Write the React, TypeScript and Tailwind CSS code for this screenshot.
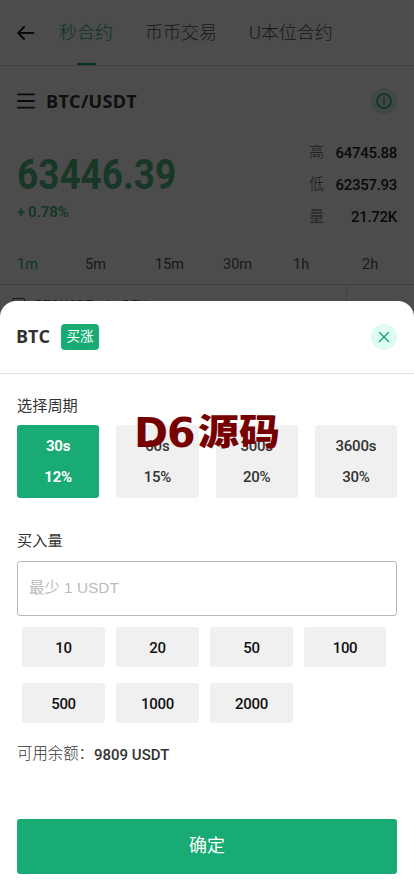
import { X } from 'lucide-react';

const stats = [
  { label: '高', value: '64745.88' },
  { label: '低', value: '62357.93' },
  { label: '量', value: '21.72K' },
];

const intervals = [
  { label: '1m', pos: 'w-[68px] text-[#2fae7d]' },
  { label: '5m', pos: 'w-[70px]' },
  { label: '15m', pos: 'w-[68px]' },
  { label: '30m', pos: 'w-[70px]' },
  { label: '1h', pos: 'w-[69px]' },
  { label: '2h', pos: 'w-[40px]' },
];

const periods = [
  { time: '30s', rate: '12%' },
  { time: '60s', rate: '15%' },
  { time: '300s', rate: '20%' },
  { time: '3600s', rate: '30%' },
];

const amounts = [10, 20, 50, 100, 500, 1000, 2000];

function BackIcon() {
  return (
    <svg viewBox="0 0 18 14" className="mr-6 h-[14px] w-[18px]" fill="none" stroke="#222" strokeWidth="2" strokeLinecap="round" strokeLinejoin="round">
      <path d="M7 1 1.2 7 7 13M1.5 7H16.5" />
    </svg>
  );
}

function MenuIcon() {
  return (
    <svg viewBox="0 0 18 16" className="h-4 w-[18px]" fill="none" stroke="#222" strokeWidth="1.8" strokeLinecap="round">
      <path d="M1 1.3h16M1 8h16M1 14.7h16" />
    </svg>
  );
}

function InfoIcon() {
  return (
    <svg viewBox="0 0 16 16" className="size-4" fill="none" stroke="#18a06c" strokeWidth="1.3">
      <circle cx="8" cy="8" r="7" />
      <path d="M8 7v4.5M8 4.2v1.5" />
    </svg>
  );
}

function Market() {
  return (
    <div className="h-[301px] overflow-hidden">
      <header className="flex h-[66px] items-center border-b border-[#d5d5d5] pl-[17px] text-[18px] font-light text-[#555560]">
        <BackIcon />
        <div className="flex h-full w-[54px] flex-col items-center justify-between whitespace-nowrap text-[#2fae7d]">
          <span className="pt-[19px] leading-[27px]">秒合约</span>
          <span className="h-0.5 w-[19px] bg-[#18ab73]" />
        </div>
        <span className="ml-8 w-[72px] whitespace-nowrap">币币交易</span>
        <span className="ml-8 whitespace-nowrap">U本位合约</span>
      </header>

      <div className="flex h-[70px] items-center pl-[17px] pr-[17px]">
        <MenuIcon />
        <h1 className="ml-[11px] font-[Open_Sans] text-[18px] font-bold tracking-[0.3px] text-[#333]">BTC/USDT</h1>
        <span className="ml-auto flex size-[26px] items-center justify-center rounded-full bg-[#d2f0e6]">
          <InfoIcon />
        </span>
      </div>

      <div className="flex h-[106px] justify-between pl-[17px] pr-[17px]">
        <div className="text-[#50b884]">
          <div className="mt-[13px] h-[52px] w-[160px] origin-left scale-x-[0.88] text-[42px] font-bold leading-[52px]">
            63446.39
          </div>
          <div className="mt-px flex text-[15px] font-bold leading-5 tracking-[-0.1px]">
            <span className="w-[11px]">+</span>
            <span>0.78%</span>
          </div>
        </div>
        <div className="flex w-[88px] flex-col">
          {stats.map((s) => (
            <div key={s.label} className="flex h-8 items-center justify-between text-[15px]">
              <span className="font-light text-[#555560]">{s.label}</span>
              <span className="pt-0.5 font-medium tracking-[-0.3px] text-[#222]">{s.value}</span>
            </div>
          ))}
        </div>
      </div>

      <div className="flex h-[43px] items-center border-b border-[#d5d5d5] pl-[17px] pt-[3px] text-[14.5px] text-[#555]">
        {intervals.map((item) => (
          <span key={item.label} className={item.pos}>
            {item.label}
          </span>
        ))}
      </div>

      <div className="flex h-10 w-[347px] border-r border-[#d5d5d5] pl-3 pt-[13px] text-[13px] leading-none text-[#666670]">
        <span className="mr-[10px] size-[13px] rounded-[2px] border border-[#444]" />
        <span className="whitespace-pre tracking-[0.3px]">BTCUSDT · 1 · DEX</span>
      </div>
    </div>
  );
}

function OrderSheet() {
  return (
    <section className="relative h-[595px] rounded-t-[16px] bg-white text-[#333]">
      <div className="flex h-[73px] items-center border-b border-[#e0e0e0] pl-4 pr-[17px]">
        <h2 className="w-[45px] pb-0.5 font-[Open_Sans] text-[18px] font-bold">BTC</h2>
        <span className="flex h-[26px] w-[38px] items-center justify-center rounded-sm bg-[#18ab73] pb-0.5 text-[13.5px] text-white">
          买涨
        </span>
        <button className="ml-auto flex size-[26px] items-center justify-center rounded-full bg-[#ddfdf3]">
          <X className="size-[18px] text-[#18a06c]" strokeWidth={1.8} />
        </button>
      </div>

      <div className="px-[17px]">
        <h3 className="pt-[21px] text-[15.2px] leading-[23px]">选择周期</h3>
        <div className="mt-[7px] grid grid-cols-4 gap-[17px]">
          {periods.map((p, i) => (
            <div
              key={p.time}
              className={
                i === 0
                  ? 'flex h-[73px] flex-col items-center rounded-[3px] bg-[#18ab73] pt-[6px] text-[15px] font-bold leading-[31px] tracking-[-0.2px] text-white'
                  : 'flex h-[73px] flex-col items-center rounded-[3px] bg-[#f0f0f0] pt-[6px] text-[15px] font-medium leading-[31px] tracking-[-0.2px]'
              }
            >
              <span>{p.time}</span>
              <span>{p.rate}</span>
            </div>
          ))}
        </div>

        <h3 className="pt-8 text-[15.2px] leading-[23px]">买入量</h3>
        <input
          className="mt-2 block h-[55px] w-full rounded-[3px] border border-[#b8b8b8] px-[11px] pb-0.5 font-['Liberation_Sans','Noto_Sans_CJK_SC',sans-serif] text-[15.4px] placeholder:text-[#bbb]"
          placeholder="最少 1 USDT"
        />

        <div className="mt-[11px] grid grid-cols-[83px_83px_83px_82px] gap-x-[11px] gap-y-4 pl-[5px] text-[15px] font-medium tracking-[-0.3px] text-[#111]">
          {amounts.map((a) => (
            <button key={a} className="h-10 rounded-[3px] bg-[#f0f0f0] pt-0.5">
              {a}
            </button>
          ))}
        </div>

        <p className="mt-[19px] flex h-6 items-center text-[15.4px]">
          <span className="w-[77px] whitespace-nowrap pt-0.5 font-light">可用余额：</span>
          <span className="pt-0.5 text-[15px] font-medium">9809 USDT</span>
        </p>

        <button className="mt-[53px] h-[55px] w-full rounded-[3px] bg-[#18ab73] pb-0.5 text-[18px] text-white">确定</button>
      </div>

      {/* watermark */}
      <div className="pointer-events-none absolute left-[134px] top-[108px] flex h-[50px] items-center whitespace-nowrap text-[#760000]">
        <span className="w-[64px] font-['DejaVu_Sans',sans-serif] text-[41px] font-bold tracking-[-1px]">D6</span>
        <span className="-mt-[9px] scale-y-[0.88] font-['Noto_Sans_CJK_SC',sans-serif] text-[41px] font-black">源码</span>
      </div>
    </section>
  );
}

export default function App() {
  return (
    <main className="relative h-[896px] w-[414px] overflow-hidden bg-white font-['Roboto','Noto_Sans_CJK_SC',sans-serif]">
      <Market />
      <div className="absolute inset-0 bg-black/70" />
      <OrderSheet />
    </main>
  );
}
